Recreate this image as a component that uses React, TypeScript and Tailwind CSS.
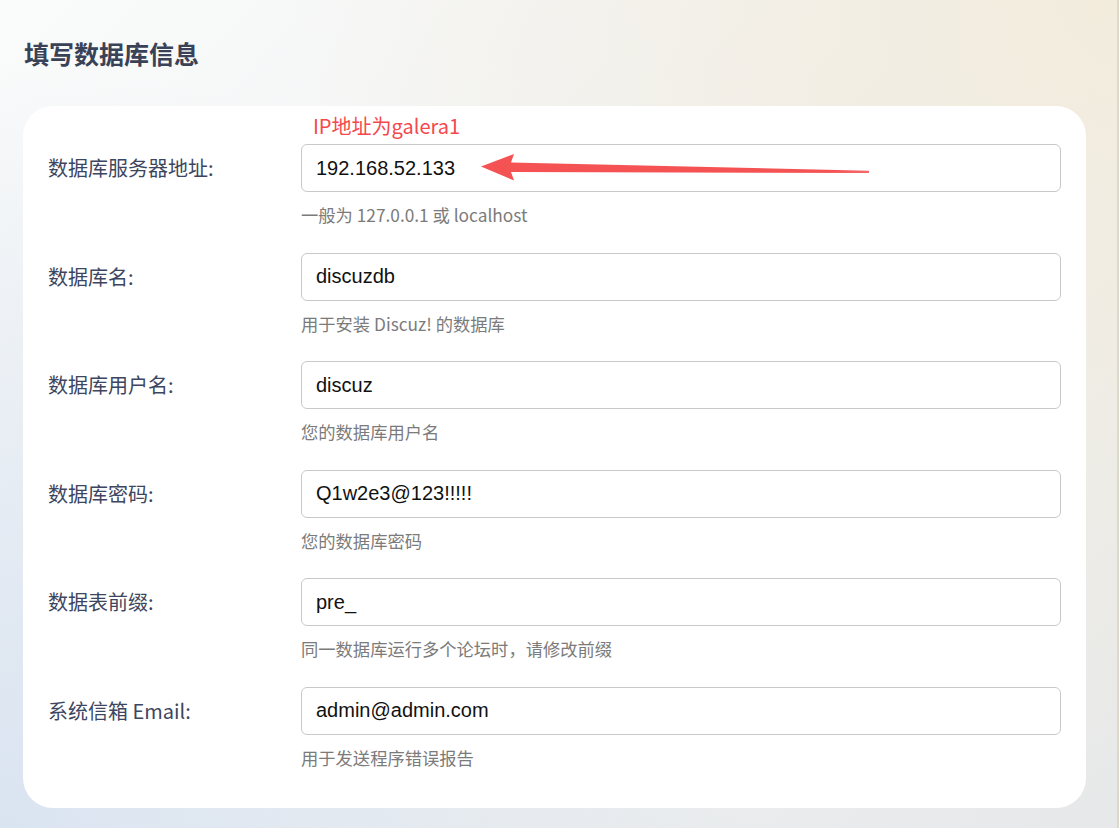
import React from 'react';

type Field = {
    label: string;
    value: string;
    hint: string;
};

const fields: Field[] = [
    { label: '数据库服务器地址:', value: '192.168.52.133', hint: '一般为 127.0.0.1 或 localhost' },
    { label: '数据库名:', value: 'discuzdb', hint: '用于安装 Discuz! 的数据库' },
    { label: '数据库用户名:', value: 'discuz', hint: '您的数据库用户名' },
    { label: '数据库密码:', value: 'Q1w2e3@123!!!!!', hint: '您的数据库密码' },
    { label: '数据表前缀:', value: 'pre_', hint: '同一数据库运行多个论坛时，请修改前缀' },
    { label: '系统信箱 Email:', value: 'admin@admin.com', hint: '用于发送程序错误报告' },
];

const cjk = "font-['Noto_Sans_CJK_SC',sans-serif]";

const App: React.FC = () => {
    return (
        <div className="relative w-[1119px] h-[828px] overflow-hidden border-r-2 border-[#dcd8cb] bg-[radial-gradient(circle_at_100%_0%,#f3ecdd,transparent_60%),radial-gradient(circle_at_0%_100%,#dae4f1,transparent_55%),linear-gradient(135deg,#fafbfb,#e6e8e9)]">
            <div className="pl-[23px] pt-[37px]">
                <h2 className={`${cjk} text-[25px] leading-[32px] font-bold text-[#3a4257] pl-px`}>
                    填写数据库信息
                </h2>

                <div className="mt-[37px] w-[1063px] rounded-[30px] bg-white pt-[38px] pl-[25px] pr-[25px] pb-[39px]">
                    <div className="flex flex-col gap-[26px]">
                        {fields.map((f) => (
                            <div key={f.label} className="grid grid-cols-[253px_1fr]">
                                <div className={`${cjk} h-[48px] flex items-center text-[20px] text-[#3d4660]`}>
                                    {f.label}
                                </div>
                                <div>
                                    <input
                                        readOnly
                                        defaultValue={f.value}
                                        className="block w-full h-[48px] rounded-[6px] border border-[#c9c9c9] bg-white px-[14px] text-[20px] text-[#111] font-['Liberation_Sans',Arial,sans-serif] outline-none"
                                    />
                                    <p className={`${cjk} mt-3 text-[17.3px] leading-[22.5px] text-[#7b7b7b]`}>
                                        {f.hint}
                                    </p>
                                </div>
                            </div>
                        ))}
                    </div>
                </div>
            </div>

            {/* annotation over the first field */}
            <div className={`${cjk} absolute left-[313px] top-[113px] text-[20px] leading-[26px] text-[#f5474c]`}>
                IP地址为galera1
            </div>
            <svg className="absolute left-0 top-0" width="1119" height="828" viewBox="0 0 1119 828">
                <defs>
                    <linearGradient id="shaft" x1="0" x2="1" y1="0" y2="0">
                        <stop offset="0" stopColor="#f55253" />
                        <stop offset="0.9" stopColor="#f55253" />
                        <stop offset="1" stopColor="#f46a6b" />
                    </linearGradient>
                </defs>
                <polygon
                    points="481,166.5 514,154 511,162.5 869,170.8 869,173 511,172 514,180.5"
                    fill="url(#shaft)"
                />
            </svg>
        </div>
    );
};

export default App;
